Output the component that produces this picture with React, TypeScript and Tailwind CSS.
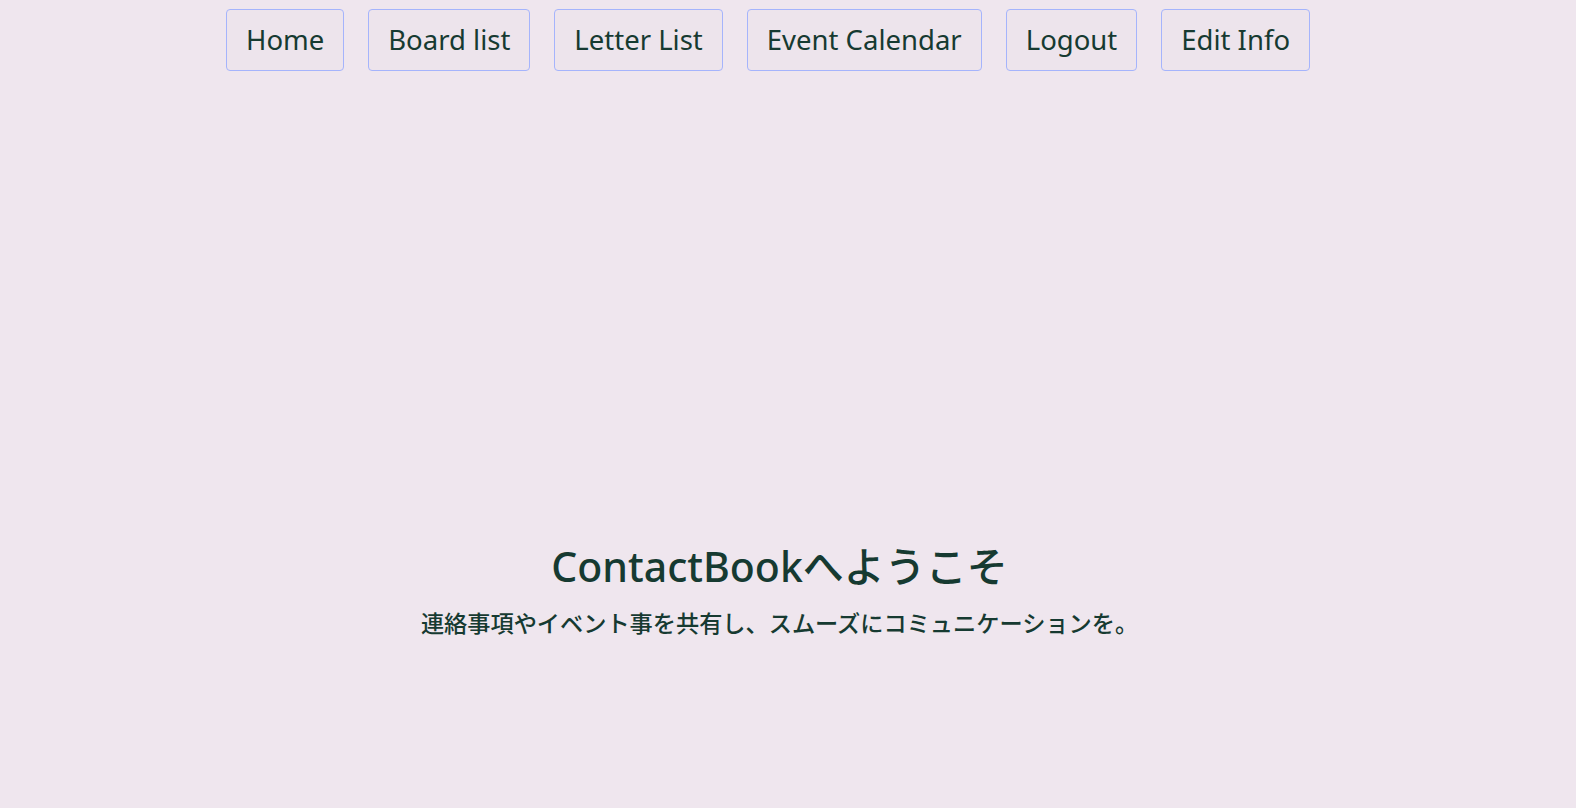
import React from "react";

const items = ["Home", "Board list", "Letter List", "Event Calendar", "Logout", "Edit Info"];

export default function App() {
  return (
    <div
      className="min-h-screen w-full bg-[#efe6ee] text-[#163a31]"
      style={{ fontFamily: '"Noto Sans", "Noto Sans CJK JP", sans-serif' }}
    >
      <nav className="flex gap-[24px] pl-[226px] pt-[9px]">
        {items.map((t) => (
          <button
            key={t}
            className="h-[62px] rounded-[4px] border border-[#a5b4fc] bg-[#ede4ec] px-[19px] text-[27.5px] leading-none text-[#163a31]"
          >
            {t}
          </button>
        ))}
      </nav>
      <main className="flex flex-col items-center pr-[17px] pt-[468px]">
        <h1 className="text-[41px] font-medium leading-[54px]">ContactBookへようこそ</h1>
        <p className="mt-[14px] text-[23.2px] font-medium leading-[32px]">
          連絡事項やイベント事を共有し、スムーズにコミュニケーションを。
        </p>
      </main>
    </div>
  );
}
